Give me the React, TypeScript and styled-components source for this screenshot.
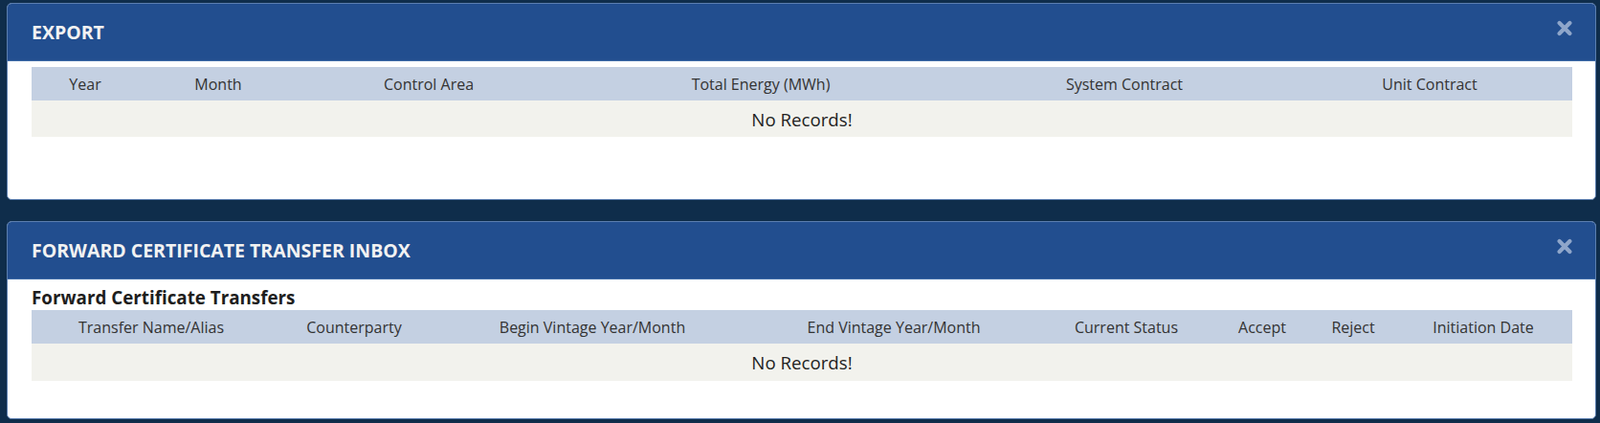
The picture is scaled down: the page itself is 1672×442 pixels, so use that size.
import React from "react";
import styled, { createGlobalStyle } from "styled-components";

const GlobalStyle = createGlobalStyle`
  html, body {
    margin: 0;
    padding: 0;
  }
  body {
    background: #0f2d4b;
    padding: 3px 4px 0 7px;
    font-family: "Open Sans", "Noto Sans", "Liberation Sans", sans-serif;
    color: #333;
  }
`;

const Page = styled.div`
  display: flex;
  flex-direction: column;
  gap: 22px;
`;

const Panel = styled.section`
  background: #ffffff;
  border: 1px solid #5b7eaf;
  border-radius: 5px;
  overflow: hidden;
`;

const PanelHeader = styled.header`
  height: 59px;
  background: #224e8f;
  border-bottom: 1px solid #3f6ca8;
  display: flex;
  align-items: center;
  justify-content: space-between;
  padding: 0 24px 0 25px;
`;

const PanelTitle = styled.h2`
  margin: 0;
  font-size: 19.5px;
  font-weight: 700;
  color: #f2f2f2;
  letter-spacing: 0;
`;

const CloseButton = styled.button`
  border: 0;
  background: transparent;
  padding: 0;
  margin-bottom: 8px;
  width: 16px;
  height: 17px;
  display: flex;
  align-items: center;
  justify-content: center;
  cursor: pointer;
`;

const PanelBody = styled.div<{ $top: number; $bottom: number }>`
  padding: ${(p) => p.$top}px 24px ${(p) => p.$bottom}px 25px;
`;

const SectionTitle = styled.h3`
  margin: 0 0 2px;
  font-size: 18.8px;
  line-height: 22px;
  font-weight: 700;
  color: #1e1e1e;
`;

const Grid = styled.div<{ $cols: string }>`
  display: grid;
  grid-template-columns: ${(p) => p.$cols};
`;

const HeadCell = styled.div`
  height: 35px;
  background: #c4d0e2;
  display: flex;
  align-items: center;
  justify-content: center;
  font-size: 16px;
  color: #333333;
  white-space: nowrap;
`;

const EmptyRow = styled.div<{ $height: number }>`
  grid-column: 1 / -1;
  height: ${(p) => p.$height}px;
  background: #f2f2ed;
  display: flex;
  align-items: center;
  justify-content: center;
  font-size: 18.7px;
  color: #222222;
`;

const CloseIcon = () => (
  <svg width="16" height="17" viewBox="0 0 16 17" aria-hidden="true">
    <g stroke="#8fa6ca" strokeWidth="4.2" strokeLinecap="round">
      <line x1="2.6" y1="3" x2="13.4" y2="14" />
      <line x1="13.4" y1="3" x2="2.6" y2="14" />
    </g>
  </svg>
);

type Col = { label: string; width: number };

const exportCols: Col[] = [
  { label: "Year", width: 112 },
  { label: "Month", width: 166 },
  { label: "Control Area", width: 274 },
  { label: "Total Energy (MWh)", width: 420 },
  { label: "System Contract", width: 340 },
  { label: "Unit Contract", width: 298 },
];

const transferCols: Col[] = [
  { label: "Transfer Name/Alias", width: 250 },
  { label: "Counterparty", width: 174 },
  { label: "Begin Vintage Year/Month", width: 324 },
  { label: "End Vintage Year/Month", width: 306 },
  { label: "Current Status", width: 180 },
  { label: "Accept", width: 104 },
  { label: "Reject", width: 86 },
  { label: "Initiation Date", width: 186 },
];

const DataTable = ({ cols, rowHeight }: { cols: Col[]; rowHeight: number }) => (
  <Grid $cols={cols.map((c) => `${c.width}fr`).join(" ")}>
    {cols.map((c) => (
      <HeadCell key={c.label}>{c.label}</HeadCell>
    ))}
    <EmptyRow $height={rowHeight}>No Records!</EmptyRow>
  </Grid>
);

export default function App() {
  return (
    <>
      <GlobalStyle />
      <Page>
        <Panel>
          <PanelHeader>
            <PanelTitle>EXPORT</PanelTitle>
            <CloseButton aria-label="Close">
              <CloseIcon />
            </CloseButton>
          </PanelHeader>
          <PanelBody $top={6} $bottom={65}>
            <DataTable cols={exportCols} rowHeight={38} />
          </PanelBody>
        </Panel>
        <Panel>
          <PanelHeader>
            <PanelTitle>FORWARD CERTIFICATE TRANSFER INBOX</PanelTitle>
            <CloseButton aria-label="Close">
              <CloseIcon />
            </CloseButton>
          </PanelHeader>
          <PanelBody $top={8} $bottom={39}>
            <SectionTitle>Forward Certificate Transfers</SectionTitle>
            <DataTable cols={transferCols} rowHeight={39} />
          </PanelBody>
        </Panel>
      </Page>
    </>
  );
}
